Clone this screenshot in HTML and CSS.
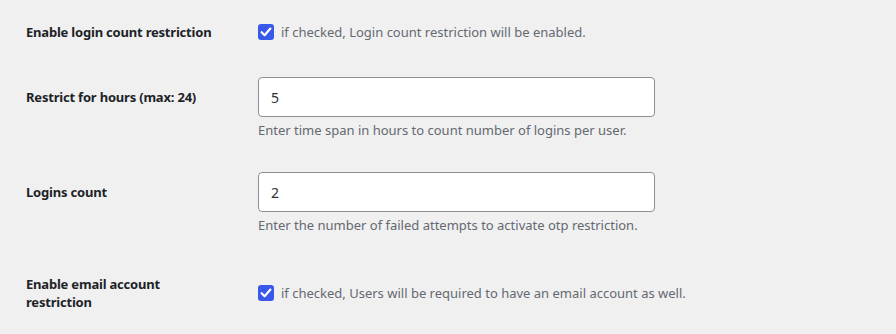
FILE: index.html
```html
<!DOCTYPE html>
<html lang="en">
<head>
<meta charset="utf-8">
<title>Login restriction settings</title>
<link rel="stylesheet" href="styles.css">
</head>
<body>
<form class="settings">
  <div class="row row-first">
    <div class="label">Enable login count restriction</div>
    <div class="field">
      <label class="check">
        <span class="box"><svg viewBox="0 0 16 16" width="16" height="16"><path d="M3.6 8.2 L6.6 11.2 L12.4 4.6" fill="none" stroke="#fff" stroke-width="2.2" stroke-linecap="round" stroke-linejoin="round"/></svg></span>
        <span class="check-text">if checked, Login count restriction will be enabled.</span>
      </label>
    </div>
  </div>
  <div class="row row-input">
    <div class="label label-input">Restrict for hours (max: 24)</div>
    <div class="field">
      <input class="text-input" type="text" value="5">
      <p class="desc">Enter time span in hours to count number of logins per user.</p>
    </div>
  </div>
  <div class="row row-input row-third">
    <div class="label label-input">Logins count</div>
    <div class="field">
      <input class="text-input" type="text" value="2">
      <p class="desc">Enter the number of failed attempts to activate otp restriction.</p>
    </div>
  </div>
  <div class="row row-last">
    <div class="label">Enable email account restriction</div>
    <div class="field">
      <label class="check">
        <span class="box"><svg viewBox="0 0 16 16" width="16" height="16"><path d="M3.6 8.2 L6.6 11.2 L12.4 4.6" fill="none" stroke="#fff" stroke-width="2.2" stroke-linecap="round" stroke-linejoin="round"/></svg></span>
        <span class="check-text">if checked, Users will be required to have an email account as well.</span>
      </label>
    </div>
  </div>
</form>
</body>
</html>
```
FILE: styles.css
```css
html, body {
  margin: 0;
  padding: 0;
  background: #f0f0f1;
}
body {
  font-family: "Noto Sans", "Open Sans", "DejaVu Sans", sans-serif;
  font-size: 13px;
  color: #1d2327;
}
.settings {
  padding: 22px 0 0 26px;
}
.row {
  display: flex;
  align-items: center;
}
.row-first {
  min-height: 20px;
}
.row-input {
  align-items: flex-start;
  margin-top: 35px;
}
.row-third {
  margin-top: 33px;
}
.row-last {
  margin-top: 41px;
}
.label {
  width: 232px;
  flex: none;
  box-sizing: border-box;
  padding-right: 30px;
  font-weight: 700;
  letter-spacing: -0.2px;
  line-height: 18px;
}
.label-input {
  line-height: 40px;
}
.field {
  flex: 1;
}
.check {
  display: flex;
  align-items: center;
  gap: 7px;
  line-height: 20px;
}
.box {
  width: 16px;
  height: 16px;
  border-radius: 3px;
  background: #3858e9;
  display: flex;
  align-items: center;
  justify-content: center;
}
.box svg {
  display: block;
}
.check-text {
  color: #646970;
}
.text-input {
  display: block;
  box-sizing: border-box;
  width: 397px;
  height: 40px;
  margin: 0;
  padding: 0 12px;
  border: 1px solid #8c8f94;
  border-radius: 4px;
  background: #fff;
  font: inherit;
  font-size: 14px;
  color: #2c3338;
}
.desc {
  margin: 4px 0 0;
  line-height: 18px;
  color: #646970;
}
```
